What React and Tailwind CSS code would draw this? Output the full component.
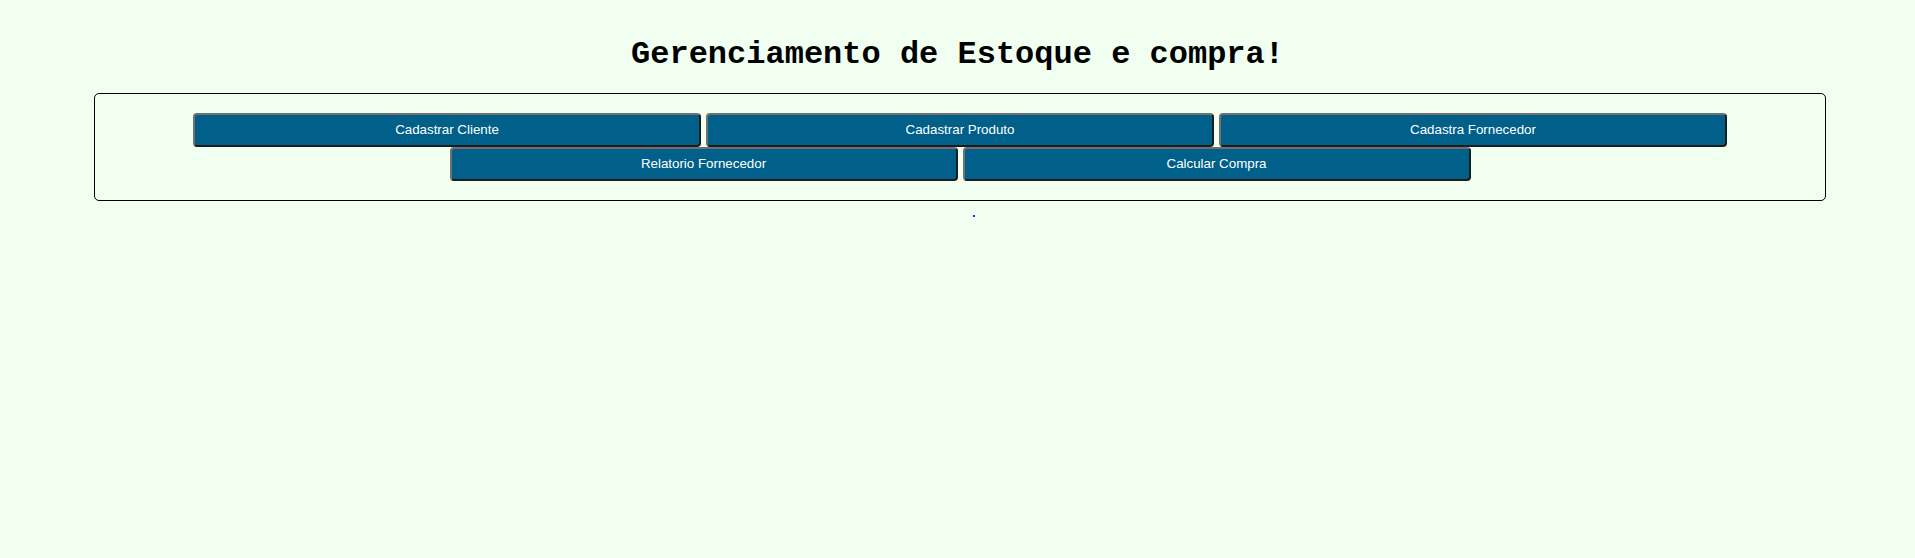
import React from "react";

const buttons = [
  "Cadastrar Cliente",
  "Cadastrar Produto",
  "Cadastra Fornecedor",
  "Relatorio Fornecedor",
  "Calcular Compra",
];

export default function App() {
  return (
    <div className="min-h-[558px] w-full bg-[#f0fff0] pt-[35px]">
      <h1 className="text-center font-['Liberation_Mono',monospace] text-[32px] font-bold leading-[40px] text-black">
        Gerenciamento de Estoque e compra!
      </h1>

      <div className="ml-[94px] mt-[18px] w-[1732px] rounded-[5px] border border-black px-[10px] py-[19px]">
        <div className="flex flex-wrap justify-center gap-x-[5px]">
          {buttons.map((label) => (
            <button
              key={label}
              className="h-[34px] w-[508px] rounded-[4px] border-2 border-t-[#707070] border-l-[#707070] border-b-[#1c1c1c] border-r-[#1c1c1c] bg-[#00608a] font-['Liberation_Sans',Arial,sans-serif] text-[13.333px] text-white"
            >
              {label}
            </button>
          ))}
        </div>
      </div>

      <div className="mt-[14px] flex justify-center">
        <span className="ml-[32px] block h-[2px] w-[2px] bg-[#2222ff]"></span>
      </div>
    </div>
  );
}
